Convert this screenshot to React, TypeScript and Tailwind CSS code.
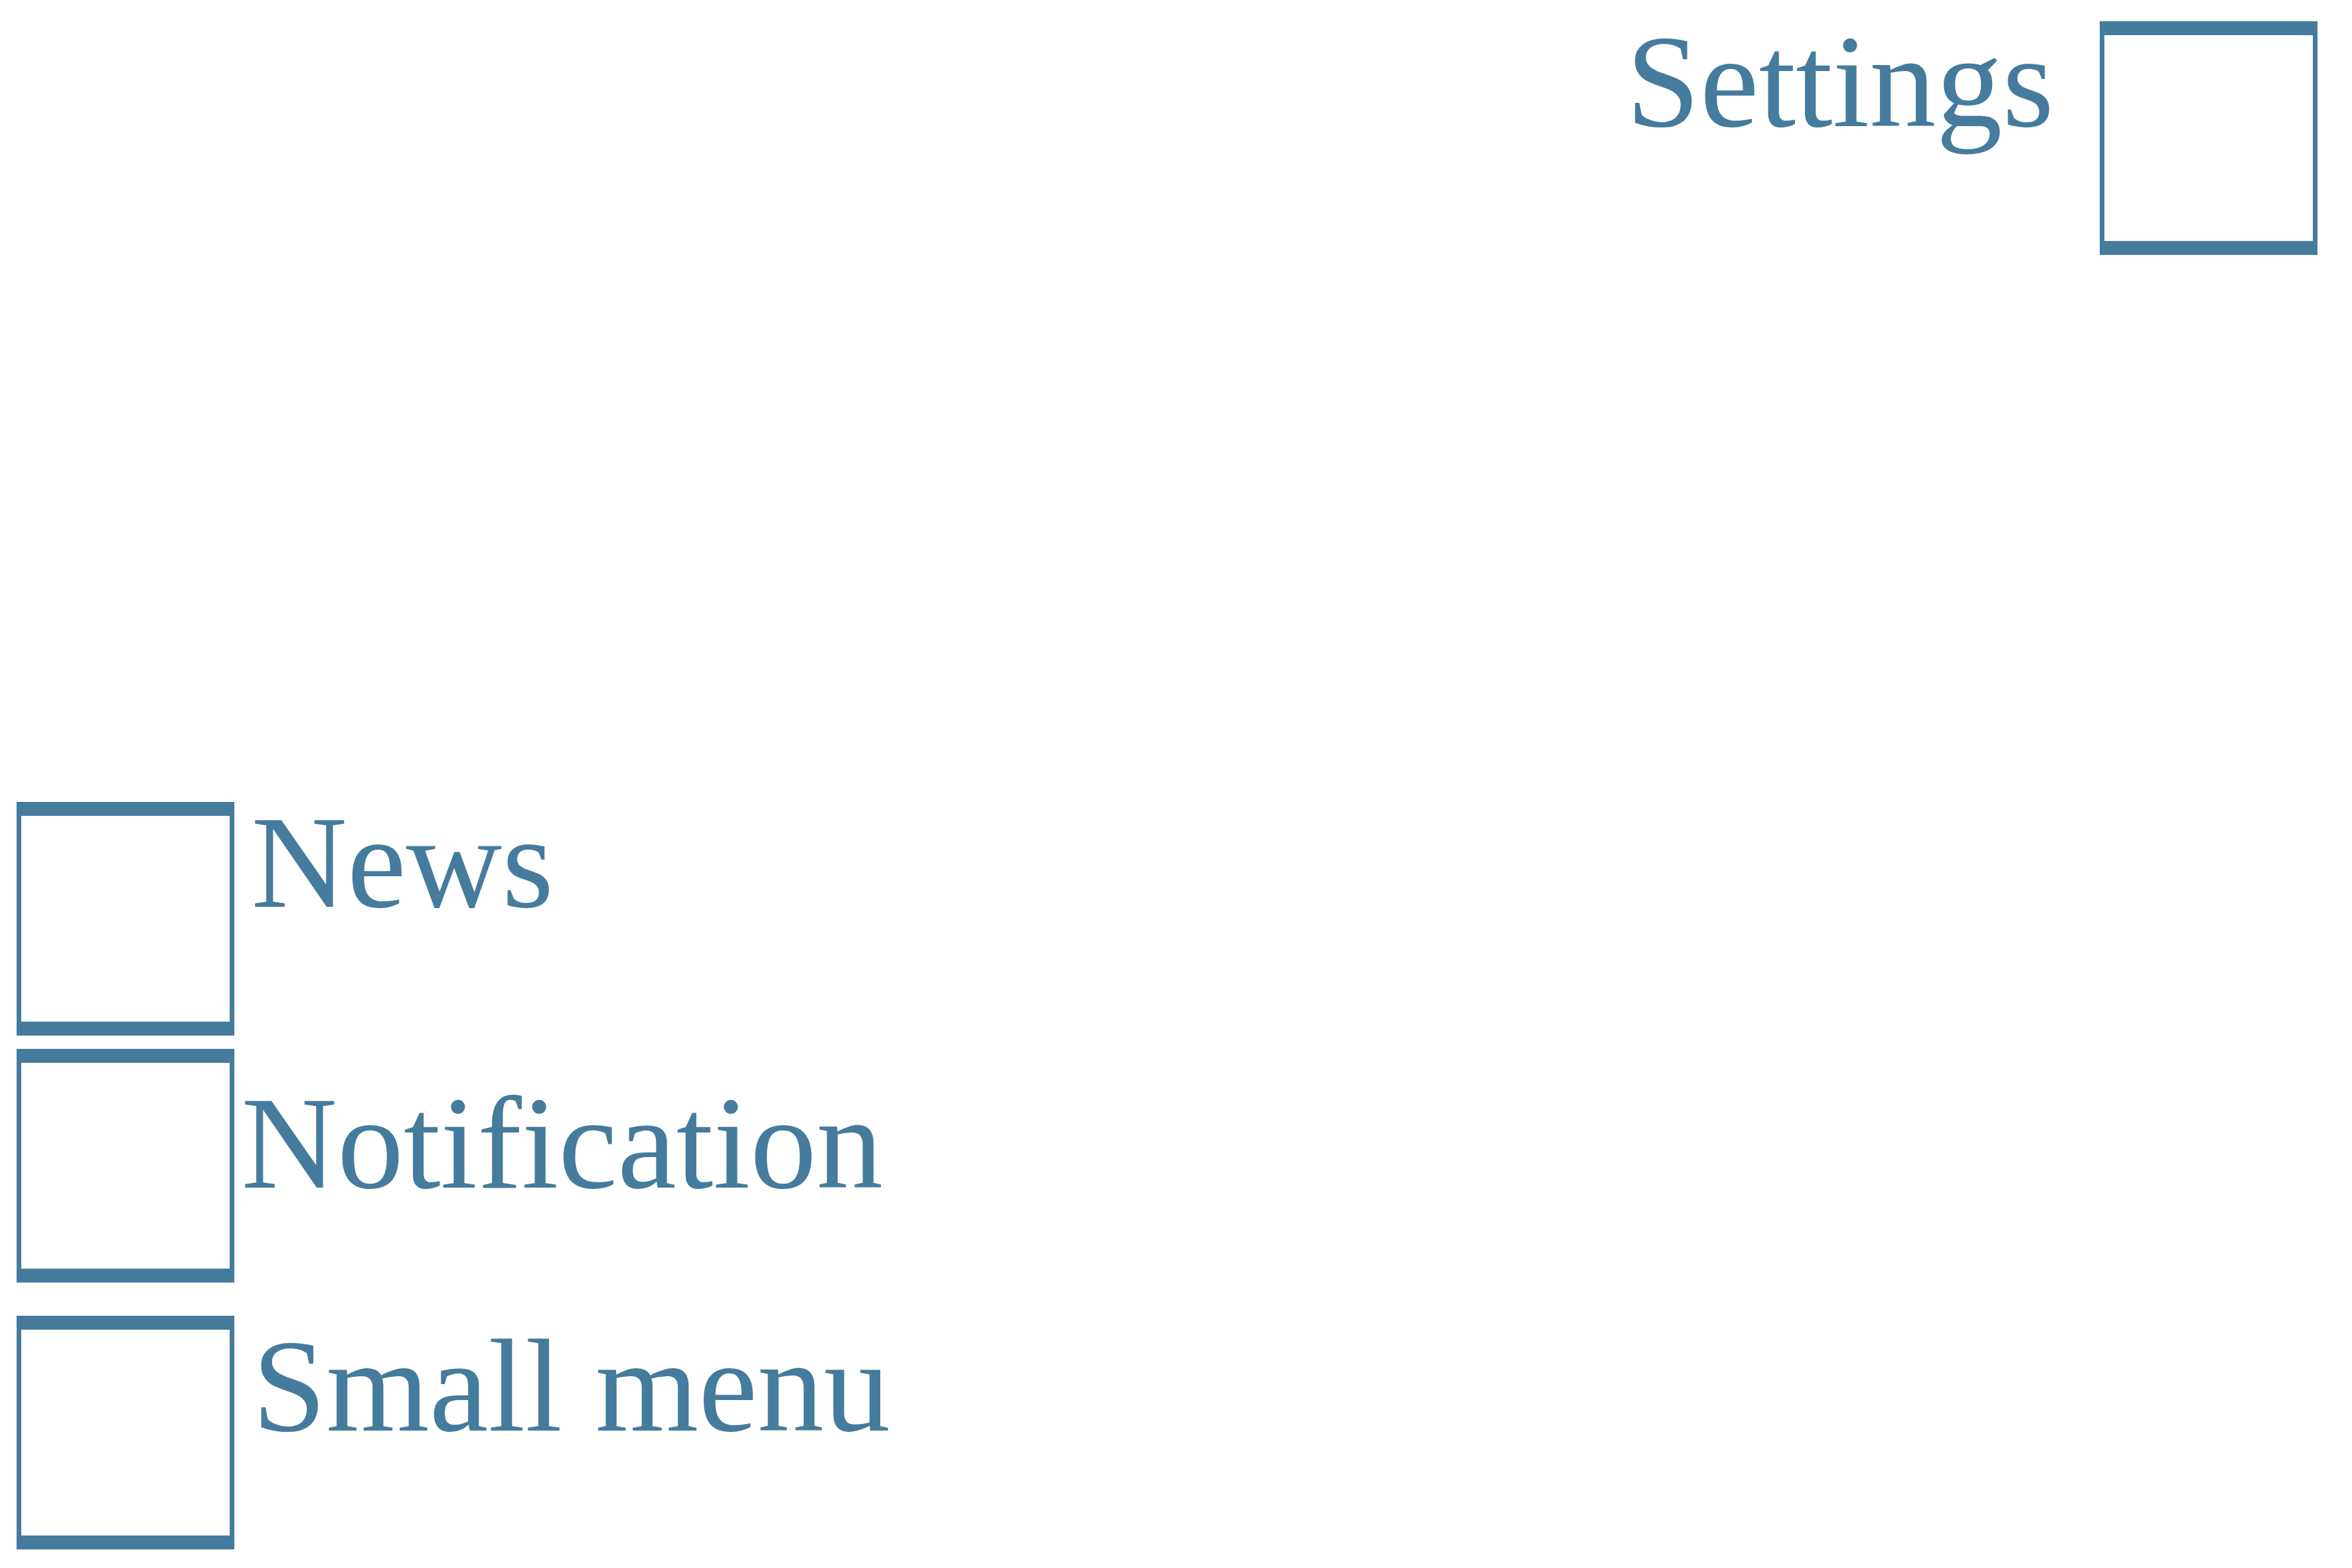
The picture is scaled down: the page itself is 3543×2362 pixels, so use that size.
import React from "react";

function Box() {
  return (
    <div className="w-[328px] h-[352px] shrink-0 box-border border-x-[7px] border-y-[21px] border-solid border-[#457b9d] bg-white" />
  );
}

const textCls =
  "font-['Liberation_Serif',_'Times_New_Roman',_serif] text-[200px] leading-none text-[#457b9d] whitespace-nowrap";

export default function App() {
  return (
    <div className="w-[3543px] h-[2362px] bg-white flex flex-col overflow-hidden">
      <div className="flex justify-end items-start pt-[32px] pr-[52px]">
        <span className={`${textCls} mt-[-9.5px] mr-[69px]`}>Settings</span>
        <Box />
      </div>
      <div className="flex-1" />
      <div className="flex flex-col items-start pl-[25px] pb-[28px]">
        <div className="flex items-start">
          <Box />
          <span className={`${textCls} mt-[-8.8px] ml-[25.6px]`}>News</span>
        </div>
        <div className="flex items-start mt-[20px]">
          <Box />
          <span className={`${textCls} mt-[41.5px] ml-[10.6px]`}>Notification</span>
        </div>
        <div className="flex items-start mt-[50px]">
          <Box />
          <span className={`${textCls} mt-[5.5px] ml-[27px]`}>Small menu</span>
        </div>
      </div>
    </div>
  );
}
